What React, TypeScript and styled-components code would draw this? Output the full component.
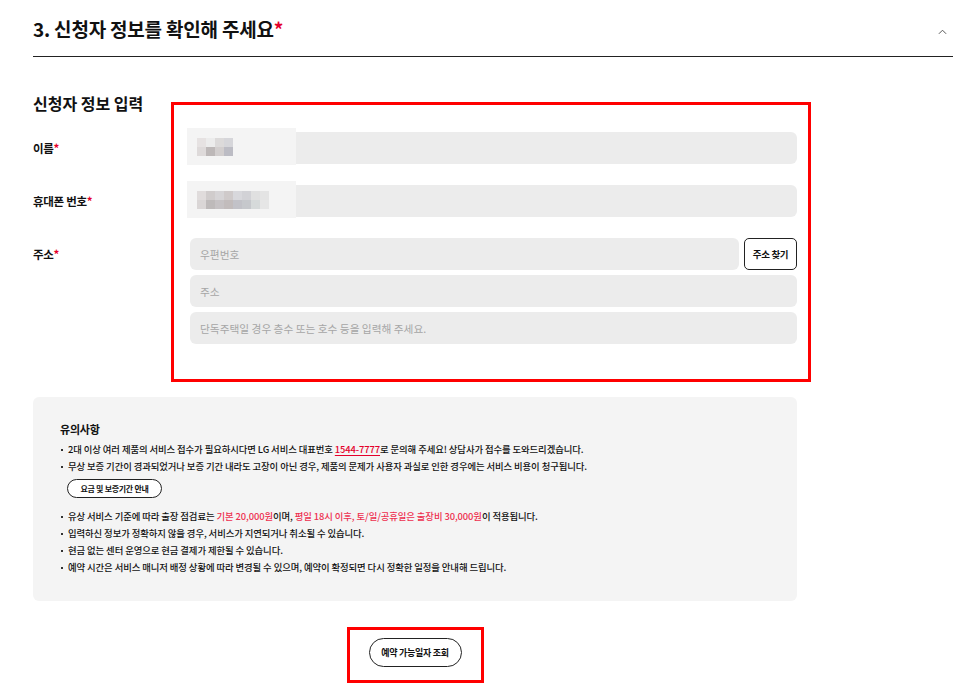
import React from 'react';
import styled, { createGlobalStyle } from 'styled-components';

const GlobalStyle = createGlobalStyle`
  body {
    margin: 0;
    background: #fff;
    font-family: 'Noto Sans CJK KR', 'Noto Sans', sans-serif;
    color: #111;
  }
`;

const RED = '#e4002b';
const PINK = '#ee2f4f';

const nameCells = ['#e6e2e2', '#ececec', '#dcdada', '#d6d6da', '#dedada', '#bdb8b8', '#d2cece', '#bcbcc4'];
const phoneCells = [
  '#e0dcdc', '#d0cccc', '#d6d4d6', '#cfcaca', '#d8d8dc', '#d2d2d6', '#e0e0e0', '#e4e4e4',
  '#dad6d6', '#bebaba', '#c6c2c4', '#c2bcbc', '#c2c2c8', '#c6c8cc', '#d6dada', '#e6e6e6',
];

export default function App() {
  return (
    <>
      <GlobalStyle />
      <Page>
        <Header>
          <Heading>
            3. 신청자 정보를 확인해 주세요<Star>*</Star>
          </Heading>
          <Chevron viewBox="0 0 10 6">
            <polyline points="1,5 5,1 9,5" />
          </Chevron>
        </Header>

        <Section>
          <SubTitle>신청자 정보 입력</SubTitle>
          <FormArea>
            <Annotation />
            <Row>
              <Label>
                이름<Star>*</Star>
              </Label>
              <Field>
                <Input />
                <Mosaic cols={4}>
                  {nameCells.map((c, i) => (
                    <Cell key={i} style={{ background: c }} />
                  ))}
                </Mosaic>
              </Field>
            </Row>
            <Row>
              <Label>
                휴대폰 번호<Star>*</Star>
              </Label>
              <Field>
                <Input />
                <Mosaic cols={8}>
                  {phoneCells.map((c, i) => (
                    <Cell key={i} style={{ background: c }} />
                  ))}
                </Mosaic>
              </Field>
            </Row>
            <Row>
              <Label>
                주소<Star>*</Star>
              </Label>
              <AddressGroup>
                <PostRow>
                  <Input placeholder="우편번호" />
                  <FindButton>주소 찾기</FindButton>
                </PostRow>
                <Input placeholder="주소" />
                <Input placeholder="단독주택일 경우 층수 또는 호수 등을 입력해 주세요." />
              </AddressGroup>
            </Row>
          </FormArea>
        </Section>

        <Notice>
          <NoticeTitle>유의사항</NoticeTitle>
          <NoticeList>
            <li>
              2대 이상 여러 제품의 서비스 접수가 필요하시다면 LG 서비스 대표번호 <Phone>1544-7777</Phone>로 문의해 주세요! 상담사가 접수를 도와드리겠습니다.
            </li>
            <li>
              무상 보증 기간이 경과되었거나 보증 기간 내라도 고장이 아닌 경우, 제품의 문제가 사용자 과실로 인한 경우에는 서비스 비용이 청구됩니다.
            </li>
          </NoticeList>
          <PillSmall>요금 및 보증기간 안내</PillSmall>
          <NoticeList>
            <li>
              유상 서비스 기준에 따라 출장 점검료는 <Hl>기본 20,000원</Hl>이며, <Hl>평일 18시 이후, 토/일/공휴일은 출장비 30,000원</Hl>이 적용됩니다.
            </li>
            <li>입력하신 정보가 정확하지 않을 경우, 서비스가 지연되거나 취소될 수 있습니다.</li>
            <li>현금 없는 센터 운영으로 현금 결제가 제한될 수 있습니다.</li>
            <li>예약 시간은 서비스 매니저 배정 상황에 따라 변경될 수 있으며, 예약이 확정되면 다시 정확한 일정을 안내해 드립니다.</li>
          </NoticeList>
        </Notice>

        <Footer>
          <Marked>
            <PillButton>예약 가능일자 조회</PillButton>
          </Marked>
        </Footer>
      </Page>
    </>
  );
}

const Page = styled.div`
  padding: 0 16px 0 33px;
  width: 920px;
`;

const Header = styled.div`
  display: flex;
  align-items: center;
  justify-content: space-between;
  height: 55px;
  padding-top: 1px;
  border-bottom: 1px solid #222;
`;

const Heading = styled.h2`
  margin: 0;
  font-size: 19px;
  font-weight: 700;
  letter-spacing: -0.2px;
`;

const Star = styled.span`
  color: ${RED};
`;

const Chevron = styled.svg`
  width: 9px;
  height: 6px;
  margin: 6px 6px 0 0;
  fill: none;
  stroke: #555;
  stroke-width: 1.1;
`;

const Section = styled.div`
  width: 764px;
  padding-top: 35px;
`;

const SubTitle = styled.h3`
  margin: 0 0 18px;
  font-size: 16px;
  font-weight: 700;
  letter-spacing: 0;
  line-height: 22px;
`;

const FormArea = styled.div`
  position: relative;
  display: flex;
  flex-direction: column;
  gap: 21px;
`;

const Annotation = styled.div`
  position: absolute;
  left: 138px;
  top: -30px;
  width: 634px;
  height: 274px;
  border: 3px solid #ff0000;
  pointer-events: none;
`;

const Row = styled.div`
  display: grid;
  grid-template-columns: 157px 1fr;
  align-items: start;
`;

const Label = styled.div`
  height: 32px;
  display: flex;
  align-items: center;
  font-size: 11.5px;
  font-weight: 700;
  letter-spacing: -0.3px;
`;

const Field = styled.div`
  position: relative;
`;

const Input = styled.input`
  box-sizing: border-box;
  width: 100%;
  height: 32px;
  border: none;
  border-radius: 6px;
  background: #ececec;
  padding: 0 10px;
  font-family: inherit;
  font-size: 10.7px;
  outline: none;
  &::placeholder {
    color: #a6a6a6;
  }
`;

const Mosaic = styled.div<{ cols: number }>`
  position: absolute;
  left: -3px;
  top: -4px;
  width: 109px;
  height: 37px;
  background: #f4f4f4;
  display: grid;
  grid-template-columns: repeat(${(p) => p.cols}, 9px);
  grid-auto-rows: 9px;
  align-content: center;
  padding-left: 10px;
  box-sizing: border-box;
`;

const Cell = styled.div``;

const AddressGroup = styled.div`
  display: flex;
  flex-direction: column;
  gap: 5px;
`;

const PostRow = styled.div`
  display: flex;
  gap: 5px;
`;

const FindButton = styled.button`
  flex: none;
  width: 53px;
  height: 32px;
  box-sizing: border-box;
  border: 1px solid #222;
  border-radius: 5px;
  background: #fff;
  font-family: inherit;
  font-size: 9.5px;
  font-weight: 700;
  letter-spacing: -0.3px;
  padding: 0;
  color: #111;
`;

const Notice = styled.div`
  width: 764px;
  box-sizing: border-box;
  margin-top: 53px;
  height: 204px;
  background: #f4f4f4;
  border-radius: 6px;
  padding: 21px 27px 0;
`;

const NoticeTitle = styled.div`
  font-size: 11px;
  font-weight: 700;
  line-height: 22px;
  letter-spacing: -0.2px;
  margin-bottom: 1px;
`;

const NoticeList = styled.ul`
  margin: 0;
  padding: 0;
  list-style: none;
  li {
    position: relative;
    padding-left: 8px;
    font-size: 9.4px;
    font-weight: 500;
    line-height: 17px;
    letter-spacing: -0.1px;
    color: #111;
    &::before {
      content: '';
      position: absolute;
      left: 1px;
      top: 8px;
      width: 2px;
      height: 2px;
      background: #333;
    }
  }
`;

const Phone = styled.span`
  color: ${RED};
  text-decoration: underline;
  text-underline-offset: 2px;
`;

const Hl = styled.span`
  color: ${PINK};
`;

const PillSmall = styled.button`
  display: block;
  margin: 4px 0 10px 7px;
  width: 95px;
  height: 19px;
  box-sizing: border-box;
  border: 1px solid #222;
  border-radius: 10px;
  background: #fff;
  font-family: inherit;
  font-size: 8px;
  font-weight: 700;
  letter-spacing: -0.3px;
  padding: 0;
  color: #111;
`;

const Footer = styled.div`
  width: 764px;
  display: flex;
  justify-content: center;
  margin-top: 26px;
`;

const Marked = styled.div`
  border: 3px solid #ff0000;
  padding: 7px 19px 13px;
`;

const PillButton = styled.button`
  width: 93px;
  height: 29px;
  box-sizing: border-box;
  border: 1px solid #222;
  border-radius: 15px;
  background: #fff;
  font-family: inherit;
  font-size: 9px;
  font-weight: 700;
  letter-spacing: -0.3px;
  padding: 0;
  color: #111;
`;
